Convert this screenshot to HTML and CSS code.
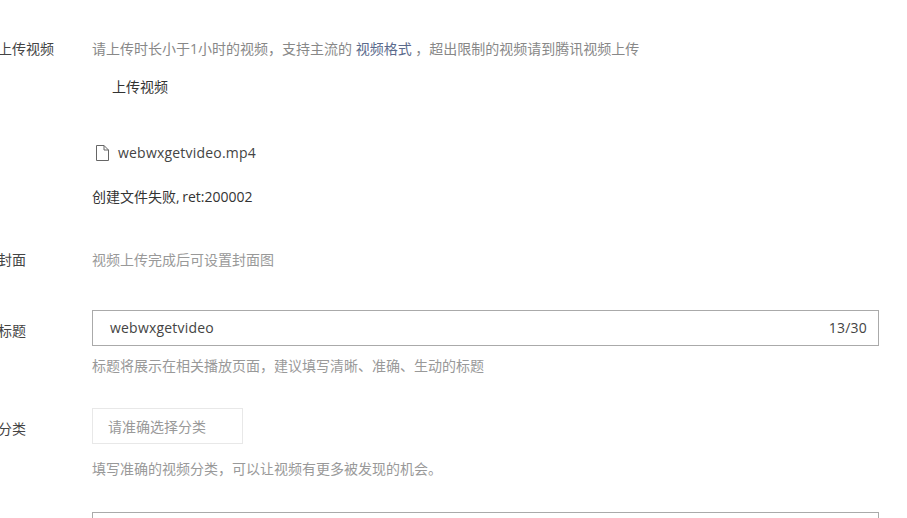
FILE: index.html
```html
<!DOCTYPE html>
<html lang="zh-CN">
<head>
<meta charset="utf-8">
<title>上传视频</title>
<link rel="stylesheet" href="styles.css">
</head>
<body>
<main class="form">
  <section class="row row-upload">
    <div class="label">上传视频</div>
    <div class="field">
      <p class="tip">请上传时长小于1小时的视频，支持主流的 <span class="link">视频格式</span> ，超出限制的视频请到腾讯视频上传</p>
      <div class="upload-btn">上传视频</div>
      <div class="file">
        <svg class="file-icon" width="14" height="16" viewBox="0 0 14 16" aria-hidden="true"><path d="M1.5 .5H9L13.5 5V15.5H1.5ZM9 .5V5H13.5" fill="none" stroke="#666" stroke-width="1"/></svg>
        <span class="latin">webwxgetvideo.mp4</span>
      </div>
      <div class="error">创建文件失败, ret:200002</div>
    </div>
  </section>
  <section class="row row-cover">
    <div class="label">封面</div>
    <div class="field"><p class="hint">视频上传完成后可设置封面图</p></div>
  </section>
  <section class="row row-title">
    <div class="label label-low">标题</div>
    <div class="field">
      <div class="input"><span class="latin">webwxgetvideo</span><span class="count latin">13/30</span></div>
      <p class="hint hint-title">标题将展示在相关播放页面，建议填写清晰、准确、生动的标题</p>
    </div>
  </section>
  <section class="row row-category">
    <div class="label label-low">分类</div>
    <div class="field">
      <div class="select">请准确选择分类</div>
      <p class="hint hint-category">填写准确的视频分类，可以让视频有更多被发现的机会。</p>
    </div>
  </section>
  <div class="row">
    <div class="label"></div>
    <div class="field"><div class="input input-next"></div></div>
  </div>
</main>
</body>
</html>
```
FILE: styles.css
```css
html, body {
  margin: 0;
  height: 518px;
  overflow: hidden;
  background: #fff;
}
body {
  font-family: "Open Sans", "Noto Sans CJK SC", sans-serif;
  font-size: 14px;
  line-height: 20px;
  color: #333;
}
p { margin: 0; }
.form {
  margin-left: -2px;
  width: 881px;
  padding-top: 39px;
}
.row { display: flex; }
.label { width: 94px; flex: none; color: #444; }
.label-low { padding-top: 11px; }
.field { flex: 1; min-width: 0; }
.latin { letter-spacing: .2px; }
.tip { color: #888; white-space: nowrap; }
.link { color: #5a6a8c; }
.upload-btn { margin: 18px 0 0 20px; color: #333; }
.file {
  display: flex;
  align-items: center;
  gap: 9px;
  margin: 46px 0 0 3px;
  color: #444;
}
.file-icon { flex: none; }
.error { margin-top: 24px; color: #333; word-spacing: -1px; }
.row-cover { margin-top: 43px; }
.hint { color: #999; }
.row-title { margin-top: 40px; }
.input {
  display: flex;
  justify-content: space-between;
  align-items: center;
  box-sizing: border-box;
  height: 36px;
  padding: 0 11px 0 17px;
  border: 1px solid #aaa;
  color: #444;
}
.count { color: #444; }
.hint-title { margin-top: 10px; }
.row-category { margin-top: 32px; }
.select {
  box-sizing: border-box;
  width: 151px;
  height: 36px;
  padding: 8px 15px;
  border: 1px solid #e8e8e8;
  color: #999;
}
.hint-category { margin-top: 15px; }
.input-next { margin-top: 33px; }
```
